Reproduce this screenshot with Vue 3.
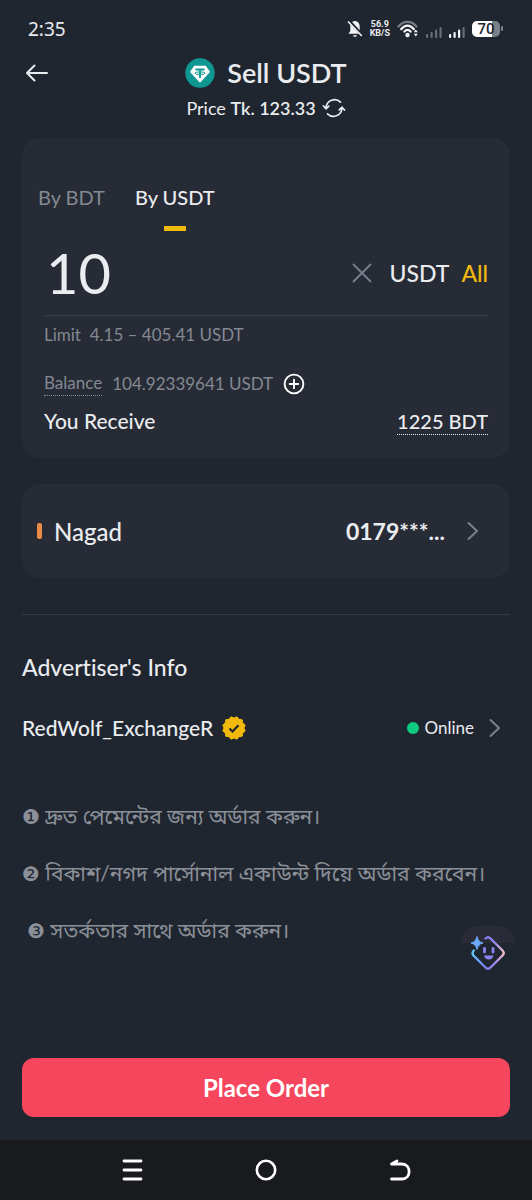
<script setup>
import { ref } from 'vue'

const amount = ref('10')
const mode = ref('USDT')
const tabs = ['BDT', 'USDT']
const notes = [
  { mark: '❶', text: 'দ্রুত পেমেন্টের জন্য অর্ডার করুন।' },
  { mark: '❷', text: 'বিকাশ/নগদ পার্সোনাল একাউন্ট দিয়ে অর্ডার করবেন।' },
  { mark: '❸', text: 'সতর্কতার সাথে অর্ডার করুন।', indent: true },
]
</script>

<template>
  <div class="screen">
    <div class="status">
      <span class="clock">2:35</span>
      <div class="status-icons">
        <svg width="16" height="18" viewBox="0 0 16 18">
          <path d="M8 1C4.8 1.2 3.300 3.500 3.300 6.500V11L1.500 13.700H14.500L12.700 11V6.500C12.700 3.500 11.200 1.200 8 1Z" fill="#f4f5f8" />
          <path d="M6 15.200H10C9.500 17.300 6.500 17.300 6 15.200Z" fill="#f4f5f8" />
          <path d="M2 1L15.500 15.500" stroke="#202630" stroke-width="3.200" />
          <path d="M1 1.500L14.800 16" stroke="#f4f5f8" stroke-width="1.600" />
        </svg>
        <span class="rate"><span>56.9</span><span>KB/S</span></span>
        <svg class="wifi" width="22" height="18" viewBox="0 0 22 18">
          <g fill="none" stroke-linecap="round">
            <path d="M1.500 6.500C6.500 0.300 14.500 0.300 19.500 6.500" stroke="#777c84" stroke-width="2.200" />
            <path d="M4.300 9C8 4.500 13 4.500 16.700 9" stroke="#f4f5f8" stroke-width="2.400" />
            <path d="M7.400 11.600C9.400 9.400 11.600 9.400 13.600 11.600" stroke="#f4f5f8" stroke-width="2.200" />
          </g>
          <circle cx="10.500" cy="15" r="2.200" fill="#f4f5f8" />
          <path d="M16.800 12.200L18.800 9.500L20.800 12.200ZM16.800 13.800L18.800 16.500L20.800 13.800Z" fill="#f4f5f8" />
        </svg>
        <svg class="signal" width="16" height="12" viewBox="0 0 16 12" fill="#666c75">
          <rect x="0" y="8" width="2.200" height="4" rx="1" /><rect x="4.500" y="6" width="2.200" height="6" rx="1" />
          <rect x="9" y="3.500" width="2.200" height="8.500" rx="1" /><rect x="13.500" y="1" width="2.200" height="11" rx="1" />
        </svg>
        <svg class="signal" width="16" height="12" viewBox="0 0 16 12" fill="#f4f5f8">
          <rect x="0" y="8" width="2.200" height="4" rx="1" /><rect x="4.500" y="6" width="2.200" height="6" rx="1" />
          <rect x="9" y="3.500" width="2.200" height="8.500" rx="1" /><rect x="13.500" y="1" width="2.200" height="11" rx="1" fill="#666c75" />
        </svg>
        <span class="battery"><span class="cell">70</span><i class="tip"></i></span>
      </div>
    </div>

    <header class="header">
      <button class="back" aria-label="Back">
        <svg width="24" height="18" viewBox="0 0 24 18" fill="none" stroke="#eaecef" stroke-width="2" stroke-linecap="round" stroke-linejoin="round">
          <path d="M22 9H2M9.500 1.500L2 9L9.500 16.500" />
        </svg>
      </button>
      <h1 class="title">
        <svg width="30" height="30" viewBox="0 0 30 30">
          <circle cx="15" cy="15" r="14.700" fill="#0d9790" />
          <path d="M9.200 7.800H20.800L25 14L15 24.800L5 14Z" fill="#fff" />
          <path d="M10.500 11.500H19.500M15 11.500V20" stroke="#0d9790" stroke-width="1.800" fill="none" />
          <ellipse cx="15" cy="15.200" rx="5" ry="1.300" stroke="#0d9790" stroke-width="1" fill="none" />
        </svg>
        <span>Sell USDT</span>
      </h1>
      <div class="price">
        <span>Price <b>Tk. 123.33</b></span>
        <button aria-label="Refresh price">
          <svg width="24" height="20" viewBox="0 0 24 20" fill="none" stroke="#eaecef" stroke-width="1.700" stroke-linecap="round" stroke-linejoin="round">
            <path d="M18.500 4.200C13.500 -0.600 4.500 1.800 4 10M1.500 8L4 10.800L6.800 8.200" />
            <path d="M5.500 15.800C10.500 20.600 19.500 18.200 20 10M17.200 11.800L20 9.200L22.500 12" />
          </svg>
        </button>
      </div>
    </header>

    <main class="main">
      <section class="card order">
        <div class="tabs" role="tablist">
          <button v-for="t in tabs" :key="t" role="tab" class="tab" :class="{ active: mode === t }" :aria-selected="mode === t" @click="mode = t">By {{ t }}</button>
        </div>
        <div class="details">
          <div class="amount">
            <input v-model="amount" aria-label="Amount" inputmode="decimal" />
            <button class="clear" aria-label="Clear amount" @click="amount = ''">
              <svg width="20" height="20" viewBox="0 0 20 20" stroke="#7b818c" stroke-width="1.800" stroke-linecap="round"><path d="M1.500 1.500L18.500 18.500M18.500 1.500L1.500 18.500" /></svg>
            </button>
            <span class="unit">USDT</span>
            <button class="all">All</button>
          </div>
          <p class="limit">Limit&nbsp; 4.15 – 405.41 USDT</p>
          <div class="balance">
            <span class="dotted">Balance</span>
            <span>104.92339641 USDT</span>
            <button aria-label="Add funds">
              <svg width="22" height="22" viewBox="0 0 22 22" fill="none" stroke="#fff" stroke-width="1.900" stroke-linecap="round"><circle cx="11" cy="11" r="9.400" /><path d="M11 6.700V15.300M6.700 11H15.300" /></svg>
            </button>
          </div>
          <div class="receive"><span>You Receive</span><span class="dotted total">1225 BDT</span></div>
        </div>
      </section>

      <button class="card method">
        <i class="bar"></i>
        <span class="method-name">Nagad</span>
        <b>0179***...</b>
        <svg width="12" height="20" viewBox="0 0 12 20" fill="none" stroke="#7b818c" stroke-width="2" stroke-linecap="round" stroke-linejoin="round"><path d="M1.500 2L10 10L1.500 18" /></svg>
      </button>

      <hr />

      <h2>Advertiser's Info</h2>
      <a class="advertiser" href="#">
        <span>RedWolf_ExchangeR</span>
        <svg width="24" height="24" viewBox="-12 -12 24 24">
          <path fill="#f0b90b" stroke="#f0b90b" stroke-linejoin="round" d="M0 -10L3 -11.200L5 -8.700L8.200 -8.200L8.700 -5L11.200 -3L10 0L11.200 3L8.700 5L8.200 8.200L5 8.700L3 11.200L0 10L-3 11.200L-5 8.700L-8.200 8.200L-8.700 5L-11.200 3L-10 0L-11.200 -3L-8.700 -5L-8.200 -8.200L-5 -8.700L-3 -11.200Z" />
          <path d="M-4.500 0.500L-1.500 3.500L4.500 -2.800" fill="none" stroke="#202630" stroke-width="2.200" />
        </svg>
        <span class="online"><i></i>Online</span>
        <svg width="12" height="20" viewBox="0 0 12 20" fill="none" stroke="#7b818c" stroke-width="2" stroke-linecap="round" stroke-linejoin="round"><path d="M1.500 2L10 10L1.500 18" /></svg>
      </a>

      <div class="notes" lang="bn">
        <p v-for="n in notes" :key="n.mark" :class="{ indent: n.indent }"><span class="mark">{{ n.mark }}</span> {{ n.text }}</p>
        <button class="assistant" aria-label="Assistant">
          <svg width="36" height="36" viewBox="0 0 36 36" fill="none">
            <defs>
              <linearGradient id="edge" x1="0" y1="0" x2="1" y2="0">
                <stop offset="0" stop-color="#62c4f5" /><stop offset="0.400" stop-color="#7d78ee" />
                <stop offset="0.750" stop-color="#a18aec" /><stop offset="1" stop-color="#f3c0c8" />
              </linearGradient>
            </defs>
            <path d="M15.500 3.500Q18 1 20.500 3.500L32.500 15.500Q35 18 32.500 20.500L20.500 32.500Q18 35 15.500 32.500L3.500 20.500Q1.500 18 3.800 15.500" stroke="url(#edge)" stroke-width="2.400" stroke-linecap="round" />
            <path d="M7 1.500Q8 7 13 8Q8 9 7 14.500Q6 9 1 8Q6 7 7 1.500Z" fill="#6da8fb" stroke="#6da8fb" />
            <path d="M14.500 13.500V17M23 13.500V17" stroke="#8f82f2" stroke-width="2.800" stroke-linecap="round" />
            <path d="M14 20.500H23.500Q22.500 24.500 18.700 24.500Q15 24.500 14 20.500Z" fill="#8f82f2" />
          </svg>
        </button>
      </div>
    </main>

    <footer class="footer"><button class="submit">Place Order</button></footer>

    <nav class="nav">
      <button aria-label="Recent apps"><svg width="22" height="24" viewBox="0 0 22 24" stroke="#fff" stroke-width="2.800" stroke-linecap="round"><path d="M3 3H20M3 12H20M3 21H20" /></svg></button>
      <button aria-label="Home"><svg width="22" height="24" viewBox="0 0 22 24" fill="none" stroke="#fff" stroke-width="2.600"><circle cx="11" cy="12" r="9.200" /></svg></button>
      <button aria-label="Back to previous"><svg width="22" height="24" viewBox="0 0 22 24" fill="none" stroke="#fff" stroke-width="2.800" stroke-linecap="round" stroke-linejoin="round"><path d="M8 3L2.500 6H13C22.500 6 22.500 21 13 21H2.500" /></svg></button>
    </nav>
  </div>
</template>

<style>
body { background: #202630; }
</style>

<style scoped>
.screen {
  display: flex;
  flex-direction: column;
  min-height: 100vh;
  background: #202630;
  color: #eaecef;
  font-family: Lato, "Noto Sans", "Noto Sans Bengali", sans-serif;
  font-size: 21px;
}
* { box-sizing: border-box; }
button {
  padding: 0;
  border: 0;
  background: none;
  color: inherit;
  font: inherit;
  cursor: pointer;
}
svg { display: block; flex: none; }
h1, h2, p { margin: 0; font-weight: 500; }

.status {
  display: flex;
  justify-content: space-between;
  align-items: center;
  height: 57px;
  padding: 0 29px 0 28px;
}
.clock { font-family: "Noto Sans", sans-serif; font-size: 19px; }
.status-icons { display: flex; align-items: center; gap: 7px; }
.rate {
  display: grid;
  font: 700 9px/9px Roboto, sans-serif;
  text-align: center;
}
.signal { align-self: flex-end; }
.battery { display: flex; align-items: center; gap: 1px; }
.cell {
  width: 28px;
  border-radius: 5px;
  background: linear-gradient(90deg, #fff 70%, #7b7f86 70%);
  color: #202630;
  font: 500 15px/16px Roboto, sans-serif;
  text-align: center;
}
.tip { width: 2px; height: 5px; border-radius: 1px; background: #7b7f86; }

.header {
  display: grid;
  grid-template-columns: 1fr auto 1fr;
  align-items: center;
  row-gap: 9px;
  padding: 0 25px;
}
.title {
  grid-column: 2;
  display: flex;
  align-items: center;
  gap: 12px;
  font-size: 27px;
  font-weight: 600;
  line-height: 32px;
}
.price {
  grid-column: 1 / -1;
  display: flex;
  justify-content: center;
  align-items: center;
  gap: 6px;
  font-size: 18px;
  line-height: 20px;
}
.price b { font-weight: 600; }

.main { padding: 20px 22px 0; }
.card { border-radius: 18px; background: #262b36; }
.order { padding: 44px 0 23px; }
.tabs { display: flex; gap: 30px; padding: 0 16px; }
.tab {
  display: grid;
  justify-items: center;
  gap: 14px;
  color: #848992;
  font-size: 20px;
  line-height: 30px;
}
.tab::after { content: ""; width: 22px; height: 5px; }
.tab.active { color: #eaecef; font-weight: 500; }
.tab.active::after { background: #f0b90b; }
.details { padding: 0 22px; }
.amount {
  display: flex;
  align-items: center;
  height: 85px;
  border-bottom: 1px solid #353b47;
  font-size: 23px;
  font-weight: 500;
}
.amount input {
  flex: 1;
  min-width: 0;
  padding: 0 0 0 2px;
  border: 0;
  outline: 0;
  background: none;
  color: #eaecef;
  font: 400 56px/64px Lato, sans-serif;
}
.unit { margin: 0 12px 0 17px; }
.all { color: #f0b90b; }
.limit, .balance { color: #848992; font-size: 17px; }
.limit { margin-top: 8px; line-height: 22px; font-weight: 400; }
.balance {
  display: flex;
  align-items: center;
  gap: 10px;
  margin-top: 25px;
  line-height: 24px;
}
.dotted { border-bottom: 1px dotted currentColor; }
.receive {
  display: flex;
  justify-content: space-between;
  margin-top: 12px;
  font-weight: 500;
  line-height: 26px;
}
.total { font-size: 20px; }
.method {
  display: flex;
  align-items: center;
  width: 100%;
  min-height: 94px;
  margin-top: 26px;
  padding: 0 31px 0 15px;
  font-size: 23px;
}
.bar { width: 5px; height: 16px; margin-right: 12px; border-radius: 2px; background: #e98a45; }
.method-name { flex: 1; text-align: left; font-size: 24px; font-weight: 500; }
.method b { margin-right: 22px; }
hr { height: 1px; margin: 36px 0 0; border: 0; background: #353b44; }
h2 { margin-top: 37px; font-size: 23px; line-height: 30px; font-variant-ligatures: none; }
.advertiser {
  display: flex;
  align-items: center;
  gap: 9px;
  margin-top: 32px;
  padding-right: 9px;
  color: inherit;
  font-weight: 500;
  line-height: 28px;
  text-decoration: none;
}
.online {
  display: flex;
  align-items: center;
  gap: 6px;
  margin: 0 6px 0 auto;
  font-size: 17px;
  font-weight: 400;
}
.online i { width: 12px; height: 12px; border-radius: 50%; background: #0ecb81; }
.notes { position: relative; margin-top: 45px; color: #8b9098; line-height: 57px; }
.notes p { font-weight: 400; }
.notes .indent { padding-left: 5px; }
.mark { font-family: "DejaVu Sans", sans-serif; font-size: 20px; line-height: 1; }
.assistant {
  position: absolute;
  right: -5px;
  bottom: -22px;
  display: grid;
  place-items: center;
  width: 54px;
  height: 54px;
  background: linear-gradient(#2a2b37, #2a2b37) top / 100% 17px no-repeat;
  border-radius: 17px 17px 0 0;
}

.footer { margin-top: auto; padding: 24px 22px 23px; }
.submit {
  width: 100%;
  border-radius: 12px;
  background: #f6465d;
  color: #fff;
  font-size: 24px;
  font-weight: 700;
  line-height: 59px;
}
.nav {
  display: flex;
  justify-content: center;
  align-items: center;
  gap: 112px;
  height: 60px;
  background: #181a1e;
}
</style>
